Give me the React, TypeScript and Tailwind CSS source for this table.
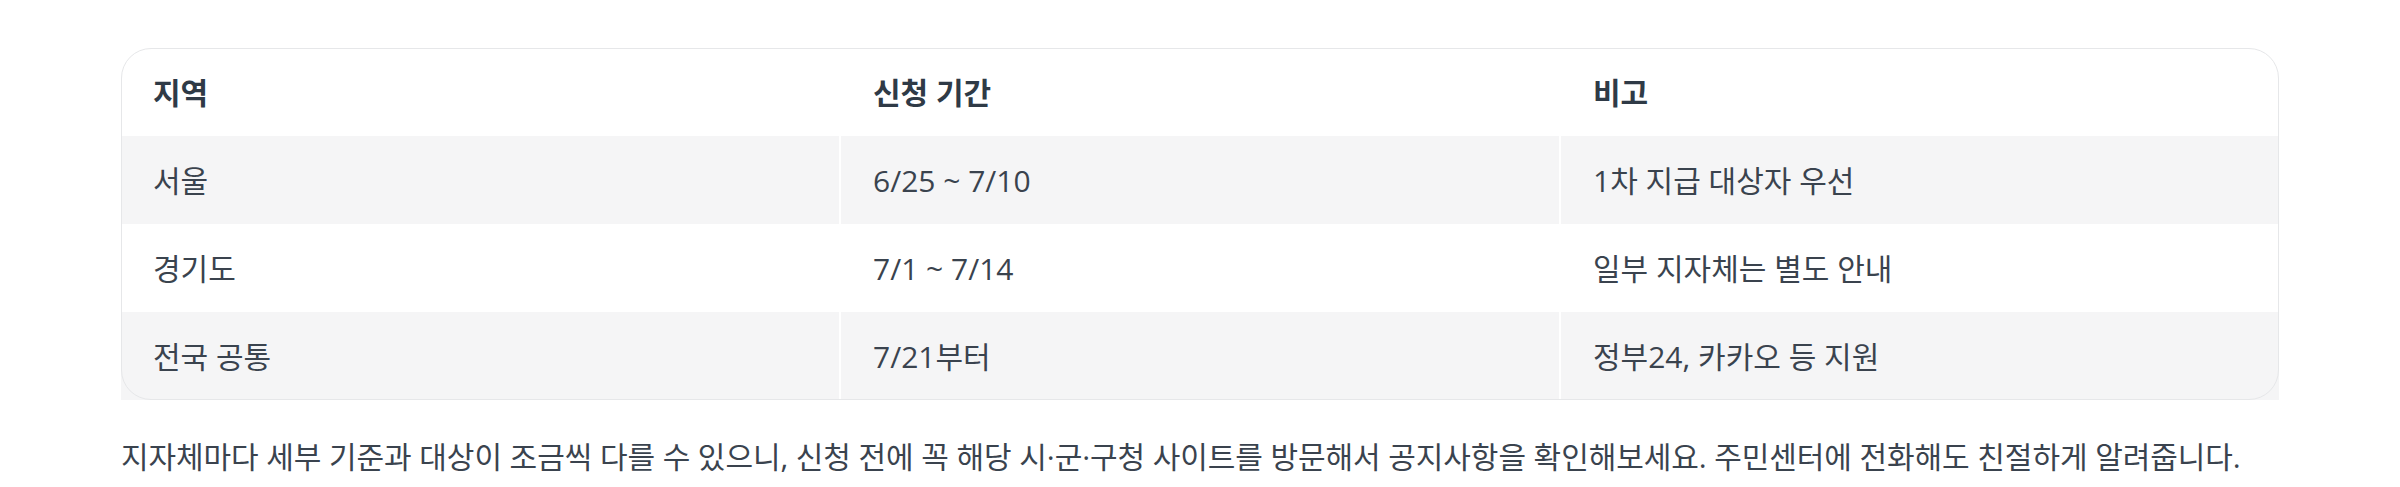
const rows = [
  { region: "서울", period: "6/25 ~ 7/10", note: "1차 지급 대상자 우선" },
  { region: "경기도", period: "7/1 ~ 7/14", note: "일부 지자체는 별도 안내" },
  { region: "전국 공통", period: "7/21부터", note: "정부24, 카카오 등 지원" },
];

const font = "font-['Open_Sans','Noto_Sans_CJK_KR',sans-serif]";

export default function App() {
  return (
    <div className={`min-h-screen bg-white px-[121px] pt-[48px] text-[#3a434e] ${font}`}>
      {/* table card: outline paints over the row backgrounds, like the original */}
      <div className="rounded-[30px] outline-1 -outline-offset-1 outline-[#e6e7e9]">
        <div className="grid grid-cols-3 gap-x-[2px]">
          {["지역", "신청 기간", "비고"].map((h) => (
            <div key={h} className="flex h-[88px] items-center px-8 text-[30px] font-bold text-[#2f3a46]">
              {h}
            </div>
          ))}
        </div>
        {rows.map((r, i) => (
          <div key={r.region} className="grid grid-cols-3 gap-x-[2px]">
            {[r.region, r.period, r.note].map((c, j) => (
              <div
                key={j}
                className={`flex h-[88px] items-center px-8 text-[30px] ${i % 2 === 0 ? "bg-[#f5f5f6]" : "bg-white"}`}
              >
                {c}
              </div>
            ))}
          </div>
        ))}
      </div>
      <p className="mt-[34px] text-[30px] leading-[45px] tracking-[-0.08px]">
        지자체마다 세부 기준과 대상이 조금씩 다를 수 있으니, 신청 전에 꼭 해당 시·군·구청 사이트를 방문해서 공지사항을 확인해보세요. 주민센터에 전화해도 친절하게 알려줍니다.
      </p>
    </div>
  );
}
